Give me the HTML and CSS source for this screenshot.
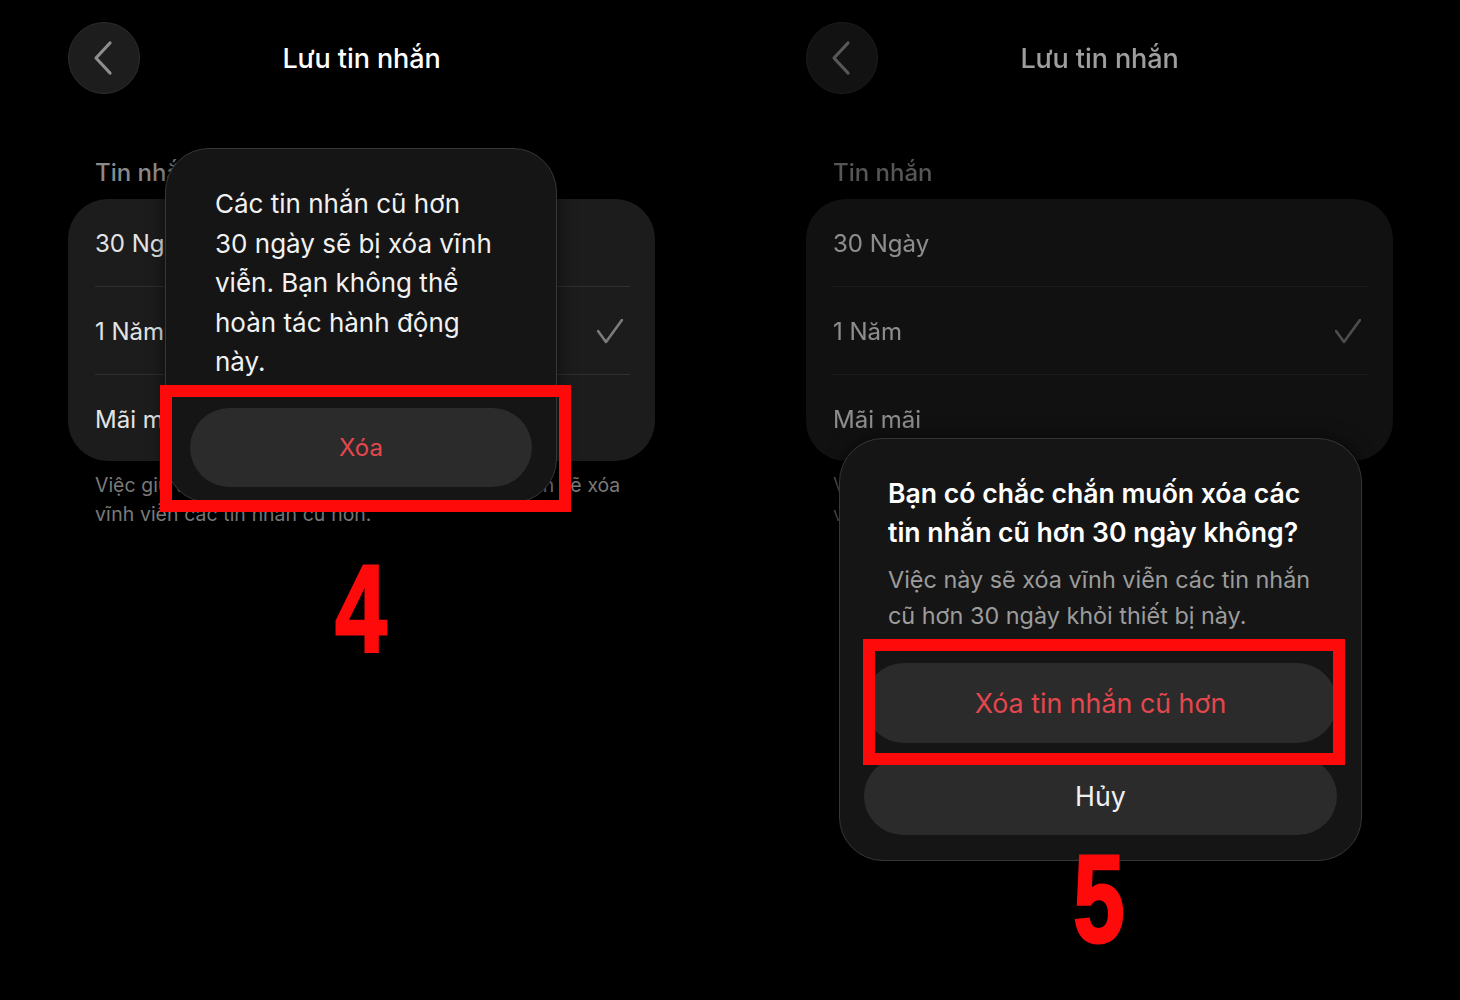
FILE: index.html
```html
<!DOCTYPE html>
<html lang="vi">
<head>
<meta charset="utf-8">
<title>Lưu tin nhắn</title>
<link rel="stylesheet" href="styles.css">
</head>
<body>
<div class="screen">
  <section class="panel">
    <div class="base">
      <header class="topbar">
        <div class="back">
          <svg width="72" height="72" viewBox="0 0 72 72"><path d="M42 21 L28 36 L42 51" fill="none" stroke="#8e8e8e" stroke-width="3.2" stroke-linecap="round" stroke-linejoin="round"/></svg>
        </div>
        <h1 class="title">Lưu tin nhắn</h1>
        <div></div>
      </header>
      <div class="section-label">Tin nhắn</div>
      <div class="card">
        <div class="row">30 Ngày</div>
        <div class="row">1 Năm
          <svg class="check" width="26" height="26" viewBox="0 0 26 26"><path d="M1 12 L9 23 L25 1" fill="none" stroke="#7c7c7c" stroke-width="2.6" stroke-linecap="round" stroke-linejoin="round"/></svg>
        </div>
        <div class="row last">Mãi mãi</div>
      </div>
      <p class="desc">Việc giữ tin nhắn trong khoảng thời gian ngắn hơn sẽ xóa<br>vĩnh viễn các tin nhắn cũ hơn.</p>
    </div>

    <div class="popup popup-a">
      <p class="popup-text">Các tin nhắn cũ hơn<br>30 ngày sẽ bị xóa vĩnh<br>viễn. Bạn không thể<br>hoàn tác hành động<br>này.</p>
      <div class="btn btn-danger btn-a">Xóa</div>
    </div>
    <div class="mark mark-a"></div>
    <div class="step step-4">4</div>
  </section>

  <section class="panel">
    <div class="base dim">
      <header class="topbar">
        <div class="back">
          <svg width="72" height="72" viewBox="0 0 72 72"><path d="M42 21 L28 36 L42 51" fill="none" stroke="#8e8e8e" stroke-width="3.2" stroke-linecap="round" stroke-linejoin="round"/></svg>
        </div>
        <h1 class="title">Lưu tin nhắn</h1>
        <div></div>
      </header>
      <div class="section-label">Tin nhắn</div>
      <div class="card">
        <div class="row">30 Ngày</div>
        <div class="row">1 Năm
          <svg class="check" width="26" height="26" viewBox="0 0 26 26"><path d="M1 12 L9 23 L25 1" fill="none" stroke="#7c7c7c" stroke-width="2.6" stroke-linecap="round" stroke-linejoin="round"/></svg>
        </div>
        <div class="row last">Mãi mãi</div>
      </div>
      <p class="desc">Việc giữ tin nhắn trong khoảng thời gian ngắn hơn sẽ xóa<br>vĩnh viễn các tin nhắn cũ hơn.</p>
    </div>

    <div class="popup popup-b">
      <h2 class="popup-title">Bạn có chắc chắn muốn xóa các<br>tin nhắn cũ hơn 30 ngày không?</h2>
      <p class="popup-sub">Việc này sẽ xóa vĩnh viễn các tin nhắn<br>cũ hơn 30 ngày khỏi thiết bị này.</p>
      <div class="actions">
        <div class="btn btn-danger btn-b1">Xóa tin nhắn cũ hơn</div>
        <div class="btn btn-plain btn-b2">Hủy</div>
      </div>
    </div>
    <div class="mark mark-b"></div>
    <div class="step step-5">5</div>
  </section>
</div>
</body>
</html>
```

FILE: styles.css
```css
* { box-sizing: border-box; }

html, body {
  margin: 0;
  padding: 0;
  background: #000;
}

body {
  font-family: "Inter", "Roboto", "Noto Sans", sans-serif;
  color: #fff;
}

.screen {
  width: 1460px;
  height: 1000px;
  display: grid;
  grid-template-columns: 722px 722px;
  column-gap: 16px;
  background: #000;
  overflow: hidden;
}

.panel {
  position: relative;
  height: 1000px;
}

.base {
  padding: 22px 67px 0 68px;
}

.dim {
  filter: brightness(0.62);
}

.topbar {
  display: grid;
  grid-template-columns: 72px 1fr 72px;
  align-items: center;
  height: 72px;
}

.back {
  width: 72px;
  height: 72px;
  border-radius: 50%;
  background: #1d1d1d;
  border: 1.5px solid #2d2d2d;
  display: flex;
  align-items: center;
  justify-content: center;
}

.back svg {
  display: block;
  margin: -1.5px;
}

.title {
  margin: 0;
  text-align: center;
  font-size: 27px;
  font-weight: 500;
  color: #fff;
  letter-spacing: -0.1px;
}

.section-label {
  margin-top: 64px;
  margin-bottom: 11px;
  padding-left: 27px;
  font-size: 24px;
  line-height: 30px;
  font-weight: 500;
  color: #8a8a8a;
}

.card {
  background: #1c1c1c;
  border-radius: 40px;
  padding: 0 25px 0 27px;
}

.row {
  height: 88px;
  border-bottom: 1px solid #2f2f2f;
  display: flex;
  align-items: center;
  justify-content: space-between;
  font-size: 24px;
  color: #e4e4e4;
  padding-top: 2px;
}

.row.last {
  height: 86px;
  border-bottom: none;
}

.check {
  margin-right: 7px;
}

.desc {
  margin: 10px 0 0;
  padding-left: 27px;
  font-size: 19.4px;
  line-height: 29px;
  word-spacing: 0.4px;
  color: #7a7a7a;
  white-space: nowrap;
}

.popup {
  position: absolute;
  background: #151515;
  border: 1.5px solid #363636;
  border-radius: 44px;
  box-shadow: 0 0 18px rgba(0, 0, 0, 0.6);
}

.popup-a {
  left: 165px;
  top: 148px;
  width: 392px;
  padding: 35px 24px 15px;
}

.popup-text {
  margin: 0;
  padding: 0 25px;
  font-size: 26px;
  line-height: 39.5px;
  color: #f1f1f1;
  white-space: nowrap;
}

.btn {
  border-radius: 40px;
  display: flex;
  align-items: center;
  justify-content: center;
  background: #2b2b2b;
}

.btn-danger {
  color: #e4474d;
}

.btn-plain {
  color: #f0f0f0;
}

.btn-a {
  margin-top: 26px;
  height: 79px;
  font-size: 24px;
}

.popup-b {
  left: 101px;
  top: 438px;
  width: 523px;
  padding: 35px 24px 25px;
}

.popup-title {
  margin: 0;
  padding: 0 24px;
  font-size: 26.6px;
  line-height: 39px;
  font-weight: 600;
  color: #fff;
  white-space: nowrap;
}

.popup-sub {
  margin: 10px 0 0;
  padding: 0 24px;
  font-size: 23.4px;
  line-height: 36px;
  color: #9c9c9c;
  white-space: nowrap;
}

.actions {
  margin-top: 29px;
  display: flex;
  flex-direction: column;
  gap: 14px;
}

.btn-b1 {
  height: 80px;
  font-size: 26.8px;
}

.btn-b2 {
  height: 78px;
  font-size: 26.8px;
}

.mark {
  position: absolute;
  border: 12px solid #fe0a0a;
}

.mark-a {
  left: 160px;
  top: 385px;
  width: 411px;
  height: 127px;
}

.mark-b {
  left: 125px;
  top: 639px;
  width: 482px;
  height: 126px;
}

.step {
  position: absolute;
  left: 0;
  width: 722px;
  text-align: center;
  font-family: "Liberation Sans", Arial, sans-serif;
  font-weight: 700;
  font-size: 125px;
  line-height: 1;
  color: #fe0a0a;
  -webkit-text-stroke: 3px #fe0a0a;
  transform: scaleX(0.74);
  transform-origin: 361px 0;
}

.step-4 {
  top: 545px;
}

.step-5 {
  top: 836px;
}
```
